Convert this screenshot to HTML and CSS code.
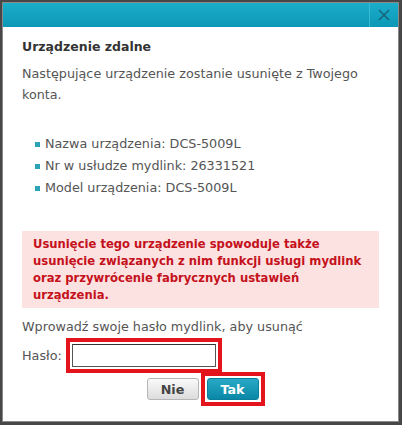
FILE: index.html
```html
<!DOCTYPE html>
<html lang="pl">
<head>
    <meta charset="UTF-8">
    <title>Urządzenie zdalne</title>
    <link rel="stylesheet" href="styles.css">
</head>
<body>
    <div class="dialog">
        <header class="dialog-header">
            <button class="close-btn" aria-label="Zamknij">
                <svg width="14" height="14" viewBox="0 0 14 14" fill="none" stroke="currentColor" stroke-width="1.6">
                    <line x1="2" y1="2" x2="12" y2="12"></line>
                    <line x1="12" y1="2" x2="2" y2="12"></line>
                </svg>
            </button>
        </header>

        <div class="dialog-body">
            <h2 class="dialog-title">Urządzenie zdalne</h2>
            <p class="intro">Następujące urządzenie zostanie usunięte z Twojego konta.</p>

            <ul class="device-info">
                <li>Nazwa urządzenia: DCS-5009L</li>
                <li>Nr w usłudze mydlink: 26331521</li>
                <li>Model urządzenia: DCS-5009L</li>
            </ul>

            <div class="warning">
                Usunięcie tego urządzenie spowoduje także usunięcie związanych z nim funkcji usługi mydlink oraz przywrócenie fabrycznych ustawień urządzenia.
            </div>

            <p class="prompt">Wprowadź swoje hasło mydlink, aby usunąć</p>

            <div class="password-row">
                <label for="password">Hasło:</label>
                <span class="highlight">
                    <input type="password" id="password" class="password-input">
                </span>
            </div>

            <div class="button-group">
                <button class="btn btn-cancel">Nie</button>
                <span class="highlight">
                    <button class="btn btn-confirm">Tak</button>
                </span>
            </div>
        </div>
    </div>
</body>
</html>
```

FILE: styles.css
```css
:root {
    --text: #555555;
    --title: #333333;
    --alert: #c4111b;
    --alert-bg: #fde2e2;
    --mark: #e3141c;
}

* {
    box-sizing: border-box;
    margin: 0;
    padding: 0;
}

body {
    font-family: "DejaVu Sans", Verdana, sans-serif;
    background: #474747;
    color: var(--text);
    width: 402px;
    height: 425px;
    padding: 2px 3px 3px 2px;
}

.dialog {
    background: #ffffff;
    border: 1px solid #8a8a8a;
    height: 100%;
    display: flex;
    flex-direction: column;
}

.dialog-header {
    height: 24px;
    background: linear-gradient(to bottom, #1aaecb, #0c97b6);
    display: flex;
    justify-content: flex-end;
    flex-shrink: 0;
}

.close-btn {
    width: 29px;
    border: none;
    border-left: 1px solid #3bb8d2;
    background: transparent;
    color: #17657a;
    display: flex;
    align-items: center;
    justify-content: center;
    cursor: pointer;
}

.dialog-body {
    padding: 12px 19px 0 19px;
}

.dialog-title {
    font-size: 12.5px;
    font-weight: bold;
    color: var(--title);
    line-height: 16px;
    margin-bottom: 8px;
}

.intro {
    font-size: 12.75px;
    line-height: 21px;
}

.device-info {
    list-style: none;
    margin: 28px 0 0 13px;
    font-size: 12.75px;
}

.device-info li {
    line-height: 22px;
    display: flex;
    align-items: center;
}

.device-info li::before {
    content: "";
    width: 5px;
    height: 5px;
    background: #2aa3b6;
    margin-right: 5px;
}

.warning {
    margin-top: 32px;
    background: var(--alert-bg);
    color: var(--alert);
    font-size: 11.6px;
    font-weight: bold;
    line-height: 17px;
    padding: 5px 10px 4px 11px;
}

.prompt {
    font-size: 12.75px;
    line-height: 20px;
    margin-top: 9px;
}

.password-row {
    display: flex;
    align-items: center;
    gap: 10px;
    margin-top: 7px;
    font-size: 12.75px;
}

.highlight {
    display: inline-flex;
    outline: 4px solid var(--mark);
    outline-offset: 2px;
}

.password-input {
    width: 144px;
    height: 23px;
    border: 1px solid #555;
    border-top-color: #333;
    background: #fff;
}

.button-group {
    display: flex;
    justify-content: center;
    gap: 8px;
    margin-top: 11px;
    padding-left: 4px;
}

.btn {
    height: 22px;
    min-width: 52px;
    border-radius: 3px;
    font-family: "DejaVu Sans", Verdana, sans-serif;
    font-size: 12.75px;
    font-weight: bold;
    cursor: pointer;
}

.btn-cancel {
    background: linear-gradient(to bottom, #fafafa, #dcdcdc);
    border: 1px solid #b5b5b5;
    color: #444;
}

.btn-confirm {
    background: linear-gradient(to bottom, #28aac6, #0a87a6);
    border: 1px solid #0a7e9b;
    color: #ffffff;
}
```
